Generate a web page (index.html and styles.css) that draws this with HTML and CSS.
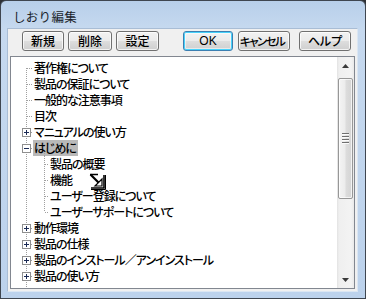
FILE: index.html
```html
<!DOCTYPE html>
<html lang="ja">
<head>
<meta charset="utf-8">
<link rel="stylesheet" href="styles.css">
</head>
<body>
<div class="window">
  <div class="titlebar"><span class="title">しおり編集</span></div>
  <div class="client">
    <div class="toolbar">
      <button class="btn w42">新規</button>
      <button class="btn w44">削除</button>
      <button class="btn w43">設定</button>
      <button class="btn ok">OK</button>
      <button class="btn cancel">キャンセル</button>
      <button class="btn help">ヘルプ</button>
    </div>
    <div class="treebox">
      <ul class="tree">
        <li class="row l1 first"><span class="gutter"></span><span class="label">著作権について</span></li>
        <li class="row l1"><span class="gutter"></span><span class="label">製品の保証について</span></li>
        <li class="row l1"><span class="gutter"></span><span class="label">一般的な注意事項</span></li>
        <li class="row l1"><span class="gutter"></span><span class="label">目次</span></li>
        <li class="row l1"><span class="gutter"><svg class="exp" width="9" height="9" viewBox="0 0 9 9"><rect x="0.5" y="0.5" width="8" height="8" fill="#fff" stroke="#8f8f8f"/><path d="M2 4.5h5M4.5 2v5" stroke="#1b2a55"/></svg></span><span class="label">マニュアルの使い方</span></li>
        <li class="row l1 open"><span class="gutter"><svg class="exp" width="9" height="9" viewBox="0 0 9 9"><rect x="0.5" y="0.5" width="8" height="8" fill="#fff" stroke="#8f8f8f"/><path d="M2 4.5h5" stroke="#1b2a55"/></svg></span><span class="label selected">はじめに</span></li>
        <li class="row l2"><span class="gutter"></span><span class="label">製品の概要</span></li>
        <li class="row l2"><span class="gutter"></span><span class="label">機能</span></li>
        <li class="row l2"><span class="gutter"></span><span class="label">ユーザー登録について</span></li>
        <li class="row l2 last"><span class="gutter"></span><span class="label">ユーザーサポートについて</span></li>
        <li class="row l1"><span class="gutter"><svg class="exp" width="9" height="9" viewBox="0 0 9 9"><rect x="0.5" y="0.5" width="8" height="8" fill="#fff" stroke="#8f8f8f"/><path d="M2 4.5h5M4.5 2v5" stroke="#1b2a55"/></svg></span><span class="label">動作環境</span></li>
        <li class="row l1"><span class="gutter"><svg class="exp" width="9" height="9" viewBox="0 0 9 9"><rect x="0.5" y="0.5" width="8" height="8" fill="#fff" stroke="#8f8f8f"/><path d="M2 4.5h5M4.5 2v5" stroke="#1b2a55"/></svg></span><span class="label">製品の仕様</span></li>
        <li class="row l1"><span class="gutter"><svg class="exp" width="9" height="9" viewBox="0 0 9 9"><rect x="0.5" y="0.5" width="8" height="8" fill="#fff" stroke="#8f8f8f"/><path d="M2 4.5h5M4.5 2v5" stroke="#1b2a55"/></svg></span><span class="label">製品のインストール／アンインストール</span></li>
        <li class="row l1"><span class="gutter"><svg class="exp" width="9" height="9" viewBox="0 0 9 9"><rect x="0.5" y="0.5" width="8" height="8" fill="#fff" stroke="#8f8f8f"/><path d="M2 4.5h5M4.5 2v5" stroke="#1b2a55"/></svg></span><span class="label">製品の使い方</span></li>
        <li class="row l1"><span class="gutter"></span><span class="label"></span></li>
      </ul>
      <div class="scrollbar">
        <div class="arrow"><svg width="7" height="4" viewBox="0 0 7 4"><path d="M3.5 0L7 4H0z" fill="#3a3a3a"/></svg></div>
        <div class="thumb"><span class="grip"></span><span class="grip"></span><span class="grip"></span><span class="grip"></span></div>
        <div class="track"></div>
        <div class="arrow"><svg width="7" height="4" viewBox="0 0 7 4"><path d="M0 0H7L3.5 4z" fill="#3a3a3a"/></svg></div>
      </div>
      <svg class="dragcursor" width="18" height="18" viewBox="0 0 18 18">
        <path d="M1 1.5H9" stroke="#000" stroke-width="1.5"/>
        <path d="M1.5 1.5L10 10" stroke="#000" stroke-width="2.2"/>
        <path d="M13 6V13H6z" fill="#fff" stroke="#000" stroke-width="1.2" stroke-linejoin="miter"/>
        <path d="M15 2V15H2" fill="none" stroke="#000" stroke-width="1.6"/>
        <path d="M16.5 2V16.5H2" fill="none" stroke="#000" stroke-width="1"/>
      </svg>
    </div>
  </div>
</div>
</body>
</html>
```
FILE: styles.css
```css
html, body {
  margin: 0;
  padding: 0;
  background: #2e3136;
}

.window {
  box-sizing: border-box;
  width: 366px;
  height: 299px;
  border: 1px solid #3f4650;
  border-radius: 6px 6px 0 0;
  background: linear-gradient(to bottom, #b8cfea 0, #c6d9ef 28px, #bcd2ec 100%);
  display: flex;
  flex-direction: column;
  padding: 0 7px 6px 6px;
  font-family: "Noto Sans CJK JP", "Noto Sans", sans-serif;
  font-size: 12px;
  color: #000;
}

.titlebar {
  height: 27px;
  box-sizing: border-box;
  padding: 7px 0 0 6px;
  line-height: 18px;
  flex: none;
}

.title {
  font-size: 12.5px;
  color: #1a1f2b;
  letter-spacing: 0.3px;
}

.client {
  flex: 1;
  background: #f0f0f0;
  border: 1px solid #a9bdd5;
  border-bottom-color: #dbe6f2;
  border-right-color: #dbe6f2;
  display: flex;
  flex-direction: column;
  padding: 2px;
  min-height: 0;
}

.toolbar {
  display: flex;
  height: 20px;
  padding-left: 12px;
  margin-bottom: 5px;
  flex: none;
}

.btn {
  height: 20px;
  box-sizing: border-box;
  border: 1px solid #707070;
  border-radius: 3px;
  background: linear-gradient(to bottom, #f2f2f2 0, #ebebeb 48%, #dddddd 52%, #cfcfcf 100%);
  box-shadow: inset 0 0 0 1px rgba(255,255,255,0.75);
  font-family: "Noto Sans CJK JP", "Noto Sans", sans-serif;
  font-size: 12px;
  font-weight: 500;
  line-height: 16px;
  padding: 0;
  color: #000;
  margin-right: 4px;
  white-space: nowrap;
  overflow: hidden;
}

.w42 { width: 42px; }
.w44 { width: 44px; }
.w43 { width: 43px; margin-right: 24px; }
.ok {
  width: 50px;
  margin-right: 5px;
  border-color: #3c7fb1;
  box-shadow: inset 0 0 0 1px #48d2fb, inset 0 0 0 2px rgba(255,255,255,0.5);
  font-family: "Liberation Sans", Arial, sans-serif;
  font-weight: 400;
  font-size: 12px;
}
.cancel {
  width: 52px;
  margin-right: 9px;
  letter-spacing: -1.6px;
  font-size: 11.5px;
  text-align: left;
  padding-left: 1px;
  font-feature-settings: "palt" 1;
}
.help { width: 52px; font-feature-settings: "palt" 1; }

.treebox {
  flex: 1;
  min-height: 0;
  border: 1px solid #828790;
  background: #fff;
  display: flex;
  position: relative;
  overflow: hidden;
}

.tree {
  flex: 1;
  list-style: none;
  margin: 0;
  padding: 3px 0 0 0;
  overflow: hidden;
}

.row {
  display: flex;
  align-items: center;
  height: 16px;
  position: relative;
  white-space: nowrap;
  font-size: 12px;
  font-weight: 500;
  letter-spacing: -1px;
  font-feature-settings: "palt" 1;
}

.gutter {
  flex: none;
  width: 22px;
  height: 16px;
  position: relative;
  display: flex;
  align-items: center;
}

.l2 .gutter { width: 38px; }

/* level-1 vertical line */
.row::before {
  content: "";
  position: absolute;
  left: 15px;
  top: 0;
  bottom: 0;
  width: 1px;
  background: linear-gradient(to bottom, #a0a0a0 50%, transparent 50%) 0 0 / 1px 2px repeat-y;
}
.row.first::before { top: 8px; }

/* horizontal connector */
.gutter::after {
  content: "";
  position: absolute;
  top: 8px;
  height: 1px;
  background: linear-gradient(to right, #a0a0a0 50%, transparent 50%) 0 0 / 2px 1px repeat-x;
}
.l1 .gutter::after { left: 16px; width: 5px; }
.l2 .gutter::after { left: 34px; width: 3px; }

/* level-2 vertical line */
.l2 .gutter::before, .open .gutter::before {
  content: "";
  position: absolute;
  left: 33px;
  top: 0;
  bottom: 0;
  width: 1px;
  background: linear-gradient(to bottom, #a0a0a0 50%, transparent 50%) 0 0 / 1px 2px repeat-y;
}
.open .gutter::before { top: 13px; }
.l2.last .gutter::before { bottom: 8px; }

.exp {
  position: relative;
  z-index: 1;
  margin-left: 11px;
  display: block;
}

.label {
  line-height: 16px;
  padding: 0 2px 0 1px;
}

.label.selected {
  background: #b9b9b9;
}

.scrollbar {
  width: 17px;
  flex: none;
  display: flex;
  flex-direction: column;
  background: linear-gradient(to right, #e2e2e2 0, #efefef 2px, #f3f3f3 14px, #e9e9e9 17px);
}

.arrow {
  height: 17px;
  flex: none;
  display: flex;
  align-items: center;
  justify-content: center;
}

.thumb {
  flex: none;
  height: 121px;
  margin: 4px 1px 0 1px;
  box-sizing: border-box;
  border: 1px solid #979797;
  border-radius: 2px;
  background: linear-gradient(to right, #f4f4f4 0, #ececec 45%, #dcdcdc 55%, #d4d4d4 100%);
  box-shadow: inset 0 0 0 1px rgba(255,255,255,0.7);
  display: flex;
  flex-direction: column;
  align-items: center;
  justify-content: center;
  gap: 1px;
}

.grip {
  width: 7px;
  height: 1px;
  background: #6f6f6f;
  box-shadow: 0 1px 0 #fbfbfb;
  margin-bottom: 1px;
}

.track { flex: 1; }

.dragcursor {
  position: absolute;
  left: 78px;
  top: 116px;
}
```
